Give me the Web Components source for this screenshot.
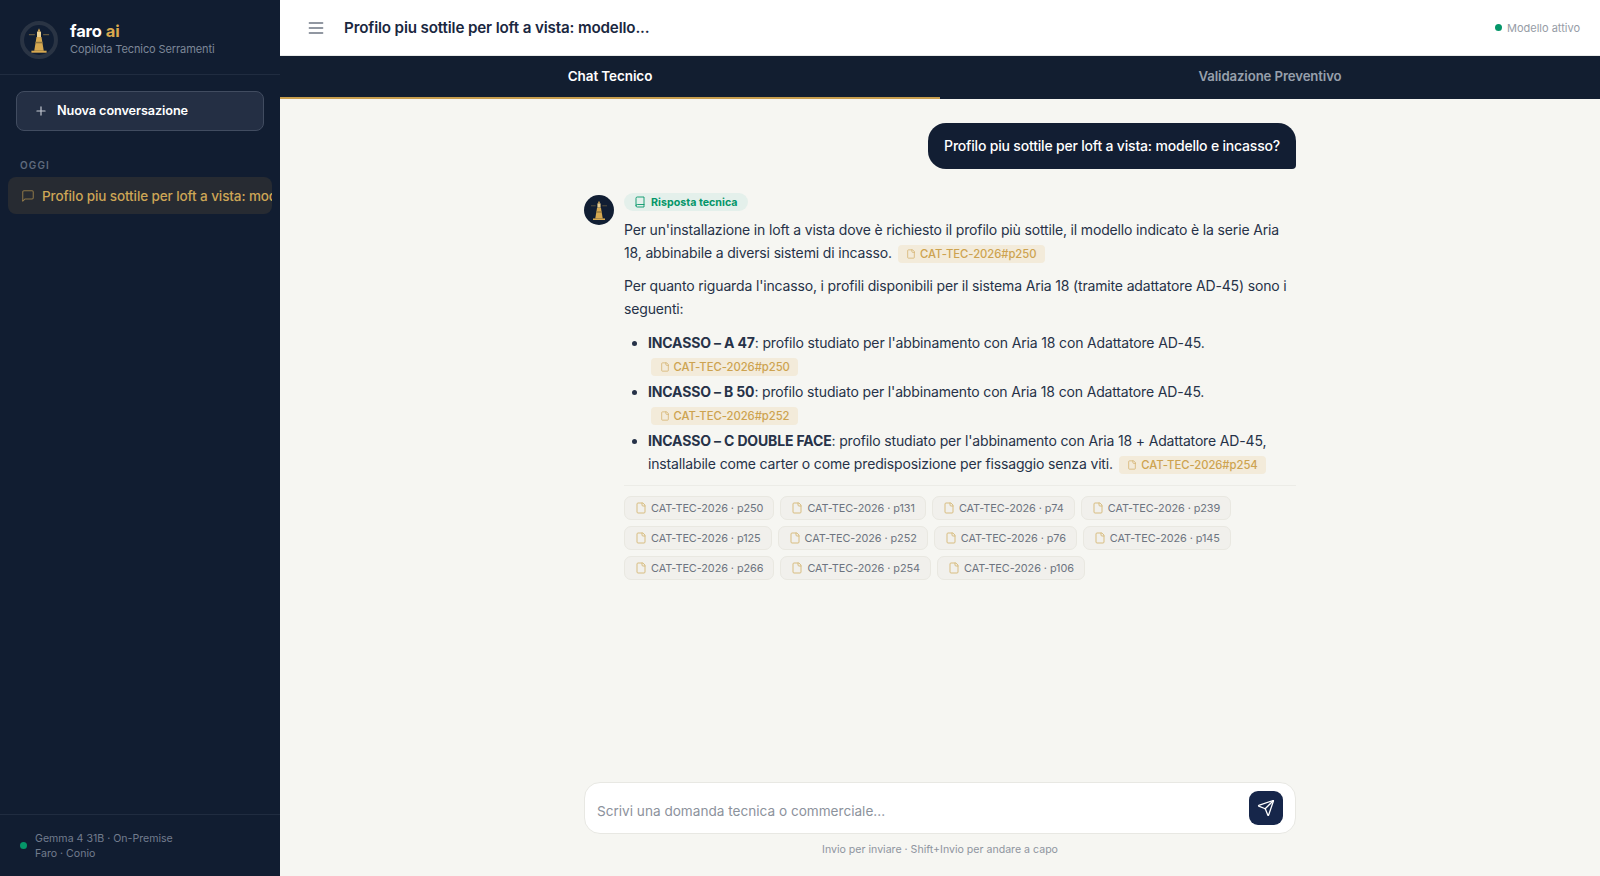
<!DOCTYPE html>
<html lang="it"><head><meta charset="utf-8"><title>faro ai</title>
<style>
html,body{margin:0;height:100%;overflow:hidden}
body{font-family:Inter,"Liberation Sans",sans-serif;background:#f6f6f2;color:#14213a}
</style></head><body>
<faro-app></faro-app>
<script>
const I={
menu:'<path d="M4 6h16M4 12h16M4 18h16"/>',
plus:'<path d="M5 12h14M12 5v14"/>',
msg:'<path d="M21 15a2 2 0 0 1-2 2H7l-4 4V5a2 2 0 0 1 2-2h14a2 2 0 0 1 2 2z"/>',
book:'<path d="M4 19.5v-15A2.5 2.5 0 0 1 6.5 2H20v20H6.5a2.5 2.5 0 0 1 0-5H20"/>',
file:'<path d="M15 2H6a2 2 0 0 0-2 2v16a2 2 0 0 0 2 2h12a2 2 0 0 0 2-2V7z"/><path d="M14 2v4a2 2 0 0 0 2 2h4"/>',
send:'<path d="M14.5 21.7a.5.5 0 0 0 .9 0l6.5-19a.5.5 0 0 0-.6-.6l-19 6.5a.5.5 0 0 0 0 .9l7.9 3.2a2 2 0 0 1 1.1 1.1z"/><path d="M21.9 2.1 10.9 13.1"/>'};
const ic=(n,s,sw=2)=>`<svg width="${s}" height="${s}" viewBox="0 0 24 24" fill="none" stroke="currentColor" stroke-width="${sw}" stroke-linecap="round" stroke-linejoin="round" style="display:block;flex:none">${I[n]}</svg>`;
const def=(name,css,html,setup)=>customElements.define(name,class extends HTMLElement{
  constructor(){super();this.attachShadow({mode:'open'}).innerHTML=`<style>${css}</style>`+(typeof html==='function'?html(this):html)}
  connectedCallback(){setup&&setup(this)}
});
const lamp=`<path d="M7.500 11.500h5M19.500 11.500h5" stroke="#c9a04f" stroke-width=".9" opacity=".45"/><path d="M14.700 9 16 6l1.300 3z" fill="#d9ab55"/><path d="M14.300 9h3.400v4.500h-3.400z" fill="#ecd193"/><path d="M13.900 13.500h4.200l1.900 11.500h-8z" fill="#d6a850"/><path d="M13.100 17.500h5.800v1.300h-5.800z" fill="#8d743e"/><path d="M9.600 25h12.800v1.700h-12.800z" fill="#d6a850"/>`;

def('faro-logo',`:host{display:block;flex:none;width:var(--s,30px);height:var(--s,30px)}svg{display:block;width:100%;height:100%}`,
 el=>`<svg viewBox="0 0 32 32"><circle cx="16" cy="16" r="${el.hasAttribute('ring')?14.300:16}" fill="#111e33" ${el.hasAttribute('ring')?'stroke="#2a3444" stroke-width="3.400"':''}/>${lamp}</svg>`);

def('side-brand',`:host{display:flex;align-items:center;gap:12px;padding:20px 20px 15px;height:39px;border-bottom:1px solid #202c40;--s:38px}
 b{display:block;font-size:16.500px;font-weight:700;line-height:20px;color:#fff;letter-spacing:-.1px}b i{font-style:normal;color:#d9a94f}
 span{display:block;font-size:11px;line-height:16px;color:#7d8798;letter-spacing:-.1px}
 div{margin-top:-1px}`,
 `<faro-logo ring></faro-logo><div><b>faro <i>ai</i></b><span>Copilota Tecnico Serramenti</span></div>`);

def('new-chat',`:host{display:flex;align-items:center;gap:9px;margin:16px 16px 0;padding:0 18px 2px 17px;box-sizing:content-box;height:36px;border:1px solid #414c60;border-radius:8px;background:#242f44;color:#fff;font-size:12.700px;font-weight:600;letter-spacing:-.1px}
 svg{color:#c6cbd3;margin-top:2px}`,()=>`${ic('plus',14)}<span>Nuova conversazione</span>`);

def('side-group',`:host{display:block;margin:26px 12px 0 20px;font-size:10px;line-height:16px;font-weight:600;letter-spacing:1.100px;color:#5f6a7c}`,`<slot></slot>`);

def('side-item',`:host{display:flex;align-items:center;gap:7px;margin:4px 8px 0;height:37px;padding:0 0 0 13px;border-radius:8px;background:#272b32;color:#cda656;font-size:13.500px;font-weight:500;overflow:hidden;white-space:nowrap;letter-spacing:-.1px}
 svg{opacity:.6}.t{overflow:hidden;flex:1;margin-right:0}`,()=>`${ic('msg',14,1.800)}<div class="t"><slot></slot></div>`);

def('side-foot',`:host{display:flex;align-items:center;gap:8px;margin-top:auto;height:61px;padding-left:20px;border-top:1px solid #202c40;font-size:10.600px;line-height:15px;color:#717c8e}
 i{width:7px;height:7px;border-radius:50%;background:#059669;flex:none}`,`<i></i><div>Gemma 4 31B · On-Premise<br>Faro · Conio</div>`);

def('side-bar',`:host{display:flex;flex-direction:column;width:280px;flex:none;height:100%;background:#111d31;box-sizing:border-box}`,`<slot></slot>`);

def('top-bar',`:host{display:flex;align-items:center;height:55px;flex:none;background:#fff;border-bottom:1px solid #e9ebea;padding:0 20px 0 26px}
 .m{color:#6e7683;margin-right:18px}.t{font-size:15.200px;font-weight:600;color:#1a2740;letter-spacing:-.15px}
 .s{margin-left:auto;display:flex;align-items:center;gap:5px;font-size:11px;color:#969ca6}i{width:7px;height:7px;border-radius:50%;background:#059669}`,
 ()=>`<div class="m">${ic('menu',20,1.700)}</div><div class="t">Profilo piu sottile per loft a vista: modello...</div><div class="s"><i></i>Modello attivo</div>`);

def('tab-bar',`:host{display:flex;flex:none;height:43px;background:#121e30}`,`<slot></slot>`);
def('tab-item',`:host{flex:1;display:flex;align-items:center;justify-content:center;box-sizing:border-box;padding-bottom:3px;font-size:13.200px;font-weight:600;color:#97a0ac;letter-spacing:-.1px}
 :host([active]){color:#fff;font-size:13.500px;border-bottom:2px solid #c9a04f;padding-bottom:1px}`,`<slot></slot>`);

def('user-msg',`:host{display:block;align-self:flex-end;background:#121e33;color:#fff;border-radius:18px 18px 4px 18px;padding:0 16px;height:46px;line-height:46px;font-size:14px;font-weight:500;letter-spacing:-.19px}`,`<slot></slot>`);

def('ai-msg',`:host{display:flex;gap:10px;margin-top:26px}.b{flex:1;min-width:0}`,`<faro-logo></faro-logo><div class="b"><slot></slot></div>`);

def('tech-badge',`:host{display:inline-flex;align-items:center;gap:5px;height:18px;padding:0 10px;border-radius:9px;background:#e4f0eb;color:#059669;font-size:10.700px;font-weight:700;margin-top:-2px;vertical-align:top}`,()=>`${ic('book',12,1.800)}<slot></slot>`);

def('cite-tag',`:host{display:inline-flex;align-items:center;gap:4px;height:18px;padding:0 8.500px;margin:0 0 0 2px;border-radius:4px;background:#f3ebda;color:#cda350;font-size:11.300px;font-weight:500;vertical-align:-1px;line-height:18px;letter-spacing:-.05px}
 svg{opacity:.8}`,()=>`${ic('file',10,1.800)}<slot></slot>`);

def('src-chip',`:host{display:inline-flex;align-items:center;gap:4px;height:22px;padding:0 10px;border:1px solid #e9e8e1;border-radius:7px;background:#f1f0ec;color:#6d7480;font-size:10.900px;white-space:nowrap;letter-spacing:-.08px}
 svg{color:#d8bd80}`,()=>`${ic('file',12,2)}<slot></slot>`);

def('src-list',`:host{display:flex;flex-wrap:wrap;gap:6px;border-top:1px solid #ecece7;margin-top:10px;padding-top:10px}`,`<slot></slot>`);

def('msg-text',`:host{display:block;font-size:14px;line-height:23px;color:#263248;letter-spacing:-.155px;margin-top:3px}
 ::slotted(p){margin:0 0 10px}
 ::slotted(ul){margin:11px 0 0;padding:0 0 0 24px}`,`<slot></slot>`);

def('chat-input',`:host{display:flex;align-items:center;box-sizing:border-box;height:52px;background:#fff;border:1px solid #e8e8e3;border-radius:16px;padding:0 12px 0 12px;font-size:13.600px;color:#8c929c}
 span{margin-top:6px}
 .b{margin:-1px 0 0 auto;width:34px;height:34px;border-radius:9px;background:#16264a;color:#fff;display:flex;align-items:center;justify-content:center}`,
 ()=>`<span><slot></slot></span><div class="b">${ic('send',18,1.700)}</div>`);

def('chat-hint',`:host{display:block;text-align:center;font-size:10.600px;line-height:14px;color:#8f959f;margin:9px 0 19px}`,`<slot></slot>`);

def('chat-view',`:host{flex:1;min-height:0;display:flex;flex-direction:column;width:712px;margin:0 auto}
 .s{flex:1;display:flex;flex-direction:column;padding-top:24px;min-height:0}`,`<div class="s"><slot></slot></div><slot name="foot"></slot>`);

def('main-pane',`:host{flex:1;min-width:0;display:flex;flex-direction:column;height:100%}`,`<slot></slot>`);

def('faro-app',`:host{display:flex;height:876px;width:1600px;overflow:hidden}`,`
<side-bar>
 <side-brand></side-brand><new-chat></new-chat><side-group>OGGI</side-group>
 <side-item>Profilo piu sottile per loft a vista: modello e incasso?</side-item>
 <side-foot></side-foot>
</side-bar>
<main-pane>
 <top-bar></top-bar>
 <tab-bar><tab-item active>Chat Tecnico</tab-item><tab-item>Validazione Preventivo</tab-item></tab-bar>
 <chat-view>
  <user-msg>Profilo piu sottile per loft a vista: modello e incasso?</user-msg>
  <ai-msg>
   <tech-badge>Risposta tecnica</tech-badge>
   <msg-text>
    <p><span>Per un'installazione in loft a vista dove è richiesto il profilo più sottile, il modello indicato è la serie Aria </span><span>18, abbinabile a diversi sistemi di incasso. </span><cite-tag>CAT-TEC-2026#p250</cite-tag></p>
    <p style="margin:0">Per quanto riguarda l'incasso, i profili disponibili per il sistema Aria 18 (tramite adattatore AD-45) sono i seguenti:</p>
    <ul>
     <li style="margin-bottom:3px"><b>INCASSO – A 47</b>: profilo studiato per l'abbinamento con Aria 18 con Adattatore AD-45. <cite-tag style="margin-left:3px">CAT-TEC-2026#p250</cite-tag></li>
     <li style="margin-bottom:3px"><b>INCASSO – B 50</b>: profilo studiato per l'abbinamento con Aria 18 con Adattatore AD-45. <cite-tag style="margin-left:3px">CAT-TEC-2026#p252</cite-tag></li>
     <li><b>INCASSO – C DOUBLE FACE</b><span>: profilo studiato per l'abbinamento con Aria 18 + Adattatore AD-45, </span><span>installabile come carter o come predisposizione per fissaggio senza viti. </span><cite-tag>CAT-TEC-2026#p254</cite-tag></li>
    </ul>
   </msg-text>
   <src-list>
    <src-chip>CAT-TEC-2026 · p250</src-chip><src-chip>CAT-TEC-2026 · p131</src-chip><src-chip>CAT-TEC-2026 · p74</src-chip><src-chip>CAT-TEC-2026 · p239</src-chip>
    <src-chip>CAT-TEC-2026 · p125</src-chip><src-chip>CAT-TEC-2026 · p252</src-chip><src-chip>CAT-TEC-2026 · p76</src-chip><src-chip>CAT-TEC-2026 · p145</src-chip>
    <src-chip>CAT-TEC-2026 · p266</src-chip><src-chip>CAT-TEC-2026 · p254</src-chip><src-chip>CAT-TEC-2026 · p106</src-chip>
   </src-list>
  </ai-msg>
  <div slot="foot"><chat-input>Scrivi una domanda tecnica o commerciale...</chat-input><chat-hint>Invio per inviare · Shift+Invio per andare a capo</chat-hint></div>
 </chat-view>
</main-pane>`);
</script>
</body></html>
